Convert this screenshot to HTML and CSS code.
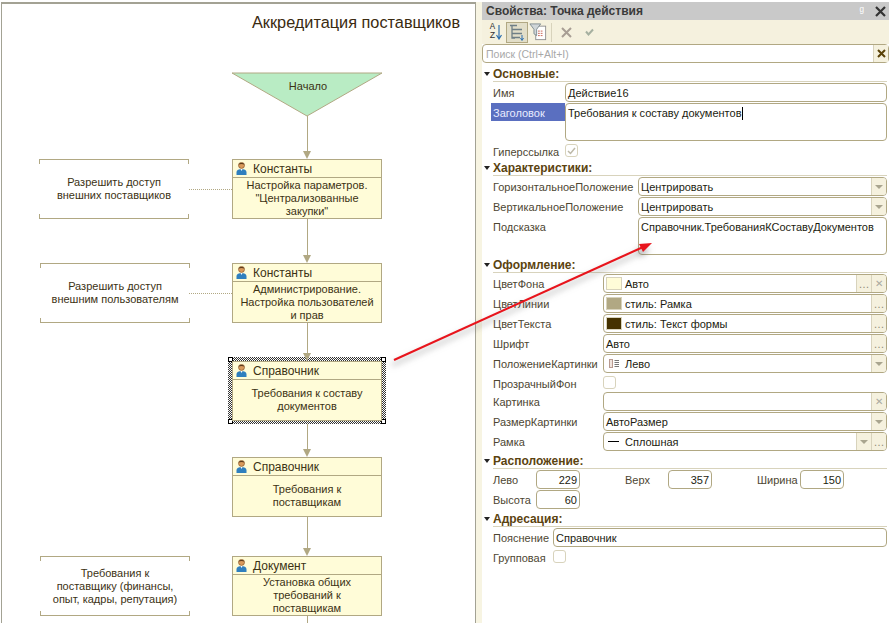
FILE: index.html
```html
<!DOCTYPE html>
<html lang="ru">
<head>
    <meta charset="UTF-8">
    <title>Свойства: Точка действия</title>
    <link rel="stylesheet" href="styles.css">
</head>
<body>
<svg width="0" height="0" class="defs">
    <symbol id="person" viewBox="0 0 11 13">
        <circle cx="5.5" cy="3.4" r="3" fill="#d99a5b" stroke="#7a4a20" stroke-width=".6"/>
        <path d="M2.6 2.6C3 .6 8 .6 8.4 2.6 7 1.8 4 1.8 2.6 2.6z" fill="#5a3a1c"/>
        <path d="M0.5 13V10C0.5 8 3 7 5.5 7S10.500 8 10.500 10V13z" fill="#2f7fbe"/>
        <path d="M4.500 7H6.500L5.500 9z" fill="#fff"/>
    </symbol>
    <pattern id="dither" width="2" height="2" patternUnits="userSpaceOnUse">
        <rect width="2" height="2" fill="#fff"/>
        <rect width="1" height="1" fill="#333"/>
        <rect x="1" y="1" width="1" height="1" fill="#333"/>
    </pattern>
</svg>
<div class="page">
    <div class="canvas">
        <div class="title">Аккредитация поставщиков</div>

        <svg class="start" width="152" height="46" viewBox="0 0 152 46">
            <path d="M1 1H151L76 44z" fill="#b9ecc4" stroke="#b1a883"/>
        </svg>
        <div class="start-text">Начало</div>

        <div class="link link-1"></div>
        <div class="link link-2"></div>
        <div class="link link-3"></div>
        <div class="link link-4"></div>
        <div class="link link-5"></div>
        <div class="link link-6"></div>
        <div class="head head-1"></div>
        <div class="head head-2"></div>
        <div class="head head-3"></div>
        <div class="head head-4"></div>
        <div class="head head-5"></div>

        <div class="note note-1">Разрешить доступ<br>внешних поставщиков</div>
        <div class="dots dots-1"></div>
        <div class="note note-2">Разрешить доступ<br>внешним пользователям</div>
        <div class="dots dots-2"></div>
        <div class="note note-3">Требования к<br>поставщику (финансы,<br>опыт, кадры, репутация)</div>

        <div class="node node-1">
            <div class="node-head"><svg width="11" height="13"><use href="#person"/></svg>Константы</div>
            <div class="node-body">Настройка параметров.<br>"Централизованные<br>закупки"</div>
        </div>
        <div class="node node-2">
            <div class="node-head"><svg width="11" height="13"><use href="#person"/></svg>Константы</div>
            <div class="node-body">Администрирование.<br>Настройка пользователей<br>и прав</div>
        </div>
        <div class="selection">
            <svg width="158" height="67" shape-rendering="crispEdges"><rect width="158" height="67" fill="url(#dither)"/></svg>
            <i class="grip g-tl"></i><i class="grip g-tr"></i><i class="grip g-bl"></i><i class="grip g-br"></i>
        </div>
        <div class="node node-3">
            <div class="node-head"><svg width="11" height="13"><use href="#person"/></svg>Справочник</div>
            <div class="node-body">Требования к составу<br>документов</div>
        </div>
        <div class="node node-4">
            <div class="node-head"><svg width="11" height="13"><use href="#person"/></svg>Справочник</div>
            <div class="node-body">Требования к<br>поставщикам</div>
        </div>
        <div class="node node-5">
            <div class="node-head"><svg width="11" height="13"><use href="#person"/></svg>Документ</div>
            <div class="node-body">Установка общих<br>требований к<br>поставщикам</div>
        </div>
    </div>

    <div class="panel">
        <div class="panel-title">
            <span>Свойства: Точка действия</span>
            <span class="pin">ᵍ</span>
            <svg width="11" height="11" viewBox="0 0 11 11"><path d="M1 1L10 10M10 1L1 10" stroke="#333" stroke-width="2.200"/></svg>
        </div>
        <div class="toolbar">
            <button class="tool sort-az"><span>A<br>Z</span>
                <svg width="6" height="15" viewBox="0 0 6 15"><path d="M3 0V13M0.500 10L3 14 5.500 10" fill="none" stroke="#2c6fb0" stroke-width="1.200"/></svg>
            </button>
            <button class="tool tool-on">
                <svg width="16" height="17" viewBox="0 0 16 17">
                    <path d="M1 1.500H8M3 1.500V14H6M3 5.500H13M3 9.500H13M3 13.500H11" fill="none" stroke="#6f7f86" stroke-width="1.300"/>
                    <path d="M13 11V16M11.500 14L13 16.500 14.500 14" fill="none" stroke="#2c6fb0"/>
                </svg>
            </button>
            <button class="tool">
                <svg width="20" height="20" viewBox="0 0 20 20">
                    <rect x="7.500" y="3.500" width="11" height="15" fill="#fff" stroke="#8d8d8d"/>
                    <path d="M10 9H16M10 11.500H16M10 14H16" stroke="#c65a4a" stroke-dasharray="2 1"/>
                    <path d="M1 1H13L8.500 7V14L5.500 12V7z" fill="#cfd6d8" stroke="#7d8a8e"/>
                </svg>
            </button>
            <i class="tool-sep"></i>
            <button class="tool">
                <svg width="11" height="11" viewBox="0 0 11 11"><path d="M1 1L10 10M10 1L1 10" stroke="#a89e94" stroke-width="2"/></svg>
            </button>
            <button class="tool tool-ok">
                <svg width="9" height="8" viewBox="0 0 9 8"><path d="M1 3.500L3.500 6.500 8 1.500" fill="none" stroke="#a6b0a0" stroke-width="2"/></svg>
            </button>
        </div>
        <div class="search">
            <span class="search-text">Поиск (Ctrl+Alt+I)</span>
            <span class="search-clear"><svg width="9" height="9" viewBox="0 0 9 9"><path d="M1 1L8 8M8 1L1 8" stroke="#5a4208" stroke-width="2"/></svg></span>
        </div>

        <div class="section section-first">
            <div class="section-head"><span>Основные:</span></div>
            <div class="row label-72"><label>Имя</label><div class="field">Действие16</div></div>
            <div class="row row-tall label-72"><label class="active">Заголовок</label><div class="field field-top">Требования к составу документов<i class="caret"></i></div></div>
            <div class="row row-check label-72"><label>Гиперссылка</label><span class="check"><svg width="9" height="8" viewBox="0 0 9 8"><path d="M1 4L3.500 6.500 8 1" fill="none" stroke="#bdb9a8" stroke-width="1.500"/></svg></span></div>
        </div>

        <div class="section">
            <div class="section-head"><span>Характеристики:</span></div>
            <div class="row label-145"><label>ГоризонтальноеПоложение</label><div class="field">Центрировать<b class="btn"><i class="tri"></i></b></div></div>
            <div class="row label-145"><label>ВертикальноеПоложение</label><div class="field">Центрировать<b class="btn"><i class="tri"></i></b></div></div>
            <div class="row row-hint label-145"><label>Подсказка</label><div class="field field-top">Справочник.ТребованияКСоставуДокументов</div></div>
        </div>

        <div class="section">
            <div class="section-head"><span>Оформление:</span></div>
            <div class="row label-110"><label>ЦветФона</label><div class="field"><i class="swatch swatch-bg"></i>Авто<b class="btn">…</b><b class="btn btn-x">✕</b></div></div>
            <div class="row label-110"><label>ЦветЛинии</label><div class="field"><i class="swatch swatch-line"></i>стиль: Рамка<b class="btn">…</b></div></div>
            <div class="row label-110"><label>ЦветТекста</label><div class="field"><i class="swatch swatch-text"></i>стиль: Текст формы<b class="btn">…</b></div></div>
            <div class="row label-110"><label>Шрифт</label><div class="field">Авто<b class="btn">…</b></div></div>
            <div class="row label-110"><label>ПоложениеКартинки</label><div class="field"><svg class="pos-icon" width="10" height="9" viewBox="0 0 10 9"><rect x=".5" y=".5" width="3" height="8" fill="#f0e4de" stroke="#b89a90"/><path d="M5.500 1.500H10M5.500 3.500H10M5.500 5.500H10M5.500 7.500H10" stroke="#777"/></svg>Лево<b class="btn"><i class="tri"></i></b></div></div>
            <div class="row row-check2 label-110"><label>ПрозрачныйФон</label><span class="check"></span></div>
            <div class="row label-110"><label>Картинка</label><div class="field"><b class="btn btn-x">✕</b></div></div>
            <div class="row label-110"><label>РазмерКартинки</label><div class="field">АвтоРазмер<b class="btn"><i class="tri"></i></b></div></div>
            <div class="row label-110"><label>Рамка</label><div class="field"><i class="dash"></i>Сплошная<b class="btn"><i class="tri"></i></b><b class="btn">…</b></div></div>
        </div>

        <div class="section">
            <div class="section-head"><span>Расположение:</span></div>
            <div class="row row-nums"><label class="num-label">Лево</label><div class="field num">229</div><label class="num-label num-gap">Верх</label><div class="field num">357</div><label class="num-label num-gap">Ширина</label><div class="field num">150</div></div>
            <div class="row row-nums"><label class="num-label">Высота</label><div class="field num">60</div></div>
        </div>

        <div class="section">
            <div class="section-head"><span>Адресация:</span></div>
            <div class="row label-60"><label>Пояснение</label><div class="field">Справочник</div></div>
            <div class="row row-check label-60"><label>Групповая</label><span class="check"></span></div>
        </div>
    </div>

    <svg class="callout" width="270" height="135" viewBox="0 0 270 135">
        <g class="callout-arrow">
            <path d="M4 120L252 7.500" stroke="#e8141c" stroke-width="2" fill="none"/>
            <path d="M262 3L249 3.900 253 12.100z" fill="#e8141c"/>
        </g>
    </svg>
</div>
</body>
</html>
```

FILE: styles.css
```css
* {
  box-sizing: border-box;
}

body {
  margin: 0;
  background: #fff;
  font-family: "Liberation Sans", Arial, sans-serif;
  font-size: 12px;
  color: #3c3214;
}

.defs {
  position: absolute;
}

.page {
  position: relative;
  display: flex;
  width: 891px;
  height: 623px;
  overflow: hidden;
  padding-top: 2px;
  background: linear-gradient(#f7f4e2, #f7f4e2) 476px 2px / 6px 100% no-repeat;
}

/* diagram */
.canvas {
  position: relative;
  width: 475px;
  height: 621px;
  margin: 0 6px 0 1px;
  background: #fff;
  border: solid #a3a294;
  border-width: 2px 1px 0 1px;
  flex: none;
}

.title {
  position: absolute;
  left: 250px;
  top: 9px;
  font-size: 16.300px;
  color: #3a2a10;
  white-space: nowrap;
}

.start {
  position: absolute;
  left: 229px;
  top: 68px;
}

.start-text {
  position: absolute;
  left: 231px;
  top: 76px;
  width: 150px;
  text-align: center;
  font-size: 11px;
}

.link {
  position: absolute;
  left: 305px;
  width: 1px;
  background: #b1a883;
}
.link-1 { top: 112px; height: 39px; }
.link-2 { top: 215px; height: 40px; }
.link-3 { top: 318px; height: 36px; }
.link-4 { top: 416px; height: 34px; }
.link-5 { top: 512px; height: 38px; }
.link-6 { top: 611px; height: 12px; }

.head {
  position: absolute;
  z-index: 1;
  left: 301px;
  width: 0;
  height: 0;
  border-left: 4.500px solid transparent;
  border-right: 4.500px solid transparent;
  border-top: 8px solid #b1a883;
}
.head-1 { top: 147px; }
.head-2 { top: 251px; }
.head-3 { top: 349px; }
.head-4 { top: 445px; }
.head-5 { top: 544px; }

.note {
  position: absolute;
  left: 38px;
  width: 150px;
  height: 60px;
  display: flex;
  flex-direction: column;
  justify-content: center;
  text-align: center;
  line-height: 13px;
  font-size: 11px;
  background:
    linear-gradient(#b1a883, #b1a883) 0 0 / 100% 1px no-repeat,
    linear-gradient(#b1a883, #b1a883) 0 100% / 100% 1px no-repeat,
    linear-gradient(#b1a883, #b1a883) 0 0 / 1px 5px no-repeat,
    linear-gradient(#b1a883, #b1a883) 100% 0 / 1px 5px no-repeat,
    linear-gradient(#b1a883, #b1a883) 0 100% / 1px 5px no-repeat,
    linear-gradient(#b1a883, #b1a883) 100% 100% / 1px 5px no-repeat;
}
.note-1 { left: 37px; top: 155px; }
.note-2 { top: 259px; }
.note-3 { top: 552px; }

.dots {
  position: absolute;
  left: 187px;
  width: 43px;
  border-top: 1px dotted #b1a883;
}
.dots-1 { top: 185px; }
.dots-2 { top: 289px; }

.node {
  position: absolute;
  left: 230px;
  width: 150px;
  height: 60px;
  background: #fffcd8;
  border: 1px solid #b1a883;
}
.node-1 { top: 155px; }
.node-2 { top: 259px; }
.node-3 { top: 357px; }
.node-4 { top: 453px; }
.node-5 { top: 552px; }

.node-head {
  display: flex;
  align-items: center;
  gap: 6px;
  height: 18px;
  padding-left: 3px;
  border-bottom: 1px solid #b1a883;
  font-size: 12px;
}

.node-body {
  height: 40px;
  display: flex;
  flex-direction: column;
  justify-content: center;
  text-align: center;
  line-height: 13px;
  font-size: 11px;
}

.selection {
  position: absolute;
  left: 226px;
  top: 353px;
  width: 158px;
  height: 67px;
}

.selection svg {
  display: block;
}

.grip {
  position: absolute;
  width: 5px;
  height: 5px;
  background: #fff;
  border: 1px solid #000;
}
.g-tl { left: 0; top: 0; }
.g-tr { right: 0; top: 0; }
.g-bl { left: 0; bottom: 0; }
.g-br { right: 0; bottom: 0; }

/* properties panel */
.panel {
  width: 407px;
  flex: none;
  background: #fff;
}

.panel-title {
  display: flex;
  align-items: center;
  height: 18px;
  padding: 0 3px 0 4px;
  background: #c9c9c9;
  font-size: 12px;
  font-weight: bold;
  color: #3a3a3a;
}

.panel-title span:first-child {
  flex: 1;
}

.pin {
  margin-right: 11px;
  color: #fff;
  font-weight: normal;
}

.toolbar {
  display: flex;
  align-items: center;
  height: 24px;
  padding-left: 4px;
  background: #f5f1de;
}

.tool {
  display: flex;
  align-items: center;
  justify-content: center;
  flex: none;
  width: 20px;
  height: 21px;
  padding: 0;
  border: 1px solid transparent;
  background: none;
  font-family: "Liberation Mono", monospace;
  font-size: 9px;
  line-height: 9px;
  color: #333;
}

.sort-az {
  gap: 1px;
}

.tool-on {
  width: 22px;
  background: #e2dec8;
  border-color: #b1a883;
}

.tool-sep {
  width: 1px;
  height: 19px;
  margin: 0 4px 0 3px;
  background: #d8d3bc;
}

.tool-ok {
  margin-left: 3px;
}

.search {
  display: flex;
  align-items: center;
  height: 19px;
  padding-left: 3px;
  background: #fff;
  border: 1px solid #b1a883;
  border-radius: 4px;
  font-size: 10.500px;
  color: #a8a8a8;
}

.search-text {
  flex: 1;
}

.search-clear {
  display: flex;
  align-items: center;
  justify-content: center;
  width: 15px;
  height: 17px;
  background: #f5f1de;
  border-left: 1px solid #d8d3bc;
}

.section {
  display: flex;
  flex-direction: column;
}

.section-head {
  display: flex;
  height: 17px;
  margin: 0 2px 1px 2px;
  padding-left: 9px;
  position: relative;
}

.section-head::before {
  content: "";
  position: absolute;
  left: 0;
  top: 7px;
  border-left: 3.500px solid transparent;
  border-right: 3.500px solid transparent;
  border-top: 4px solid #222;
}

.section-head span {
  flex: 1;
  padding-top: 2px;
  font-weight: bold;
  font-size: 12px;
  line-height: 15px;
  color: #5b4310;
  border-bottom: 1px solid #d8d3bc;
}

.section-first .section-head {
  margin-top: 2px;
}

.row {
  display: flex;
  align-items: stretch;
  height: 19px;
  margin-bottom: 1px;
  padding-left: 11px;
  padding-right: 2px;
}

.row label {
  flex: none;
  line-height: 20px;
  font-size: 11px;
  color: #4d4632;
  white-space: nowrap;
}

.label-72 label { width: 72px; }
.label-145 label { width: 145px; }
.label-110 label { width: 110px; }
.label-60 label { width: 60px; }

.row label.active {
  height: 18px;
  margin-left: -2px;
  width: 74px;
  padding-left: 2px;
  background: #5a6fc0;
  color: #e8ecff;
}

.field {
  flex: 1;
  display: flex;
  align-items: center;
  min-width: 0;
  padding-left: 2px;
  background: #fff;
  border: 1px solid #b1a883;
  border-radius: 4px;
  font-size: 11px;
  color: #1c1c10;
  white-space: nowrap;
  overflow: hidden;
}

.field-top {
  align-items: flex-start;
  padding-top: 3px;
}

.row-tall {
  height: 38px;
}

.row-hint {
  height: 38px;
}

.row-check {
  height: 17px;
  margin-bottom: 0;
  align-items: center;
}

.row-check2 {
  height: 17px;
  margin-bottom: 1px;
  align-items: center;
}

.row-check label,
.row-check2 label {
  margin-top: 3px;
}

.caret {
  width: 1px;
  height: 13px;
  margin-left: 1px;
  background: #000;
}

.check {
  display: flex;
  align-items: center;
  justify-content: center;
  width: 13px;
  height: 13px;
  background: #fff;
  border: 1px solid #d8d3bc;
  border-radius: 3px;
}

.btn {
  display: flex;
  align-items: center;
  justify-content: center;
  flex: none;
  width: 15px;
  height: 100%;
  background: #f5f1de;
  border-left: 1px solid #d8d3bc;
  font-weight: normal;
  color: #8e8a78;
}

.field > .btn:first-of-type {
  margin-left: auto;
}

.btn-x {
  font-size: 10px;
  color: #a9a9a0;
}

.tri {
  border-left: 4px solid transparent;
  border-right: 4px solid transparent;
  border-top: 4px solid #a9a58f;
}

.swatch {
  width: 16px;
  height: 13px;
  margin-right: 3px;
  border: 1px solid #d8d3bc;
}
.swatch-bg { background: #fffcd8; }
.swatch-line { background: #b1a883; }
.swatch-text { background: #453200; }

.pos-icon {
  margin: 0 6px 0 3px;
}

.dash {
  width: 11px;
  height: 1px;
  margin: 0 6px 0 2px;
  background: #000;
}

.row-nums {
  justify-content: flex-start;
}

.num-label {
  width: 43px;
}

.num-label.num-gap {
  width: 43px;
  margin-left: 45px;
}

.field.num {
  flex: none;
  width: 44px;
  justify-content: flex-end;
  padding-right: 2px;
}

/* red arrow pasted over the screenshot */
.callout {
  position: absolute;
  left: 390px;
  top: 240px;
  overflow: visible;
}

.callout-arrow {
  filter: drop-shadow(-2px 5px 3px rgba(90, 90, 90, 0.55));
}
```
